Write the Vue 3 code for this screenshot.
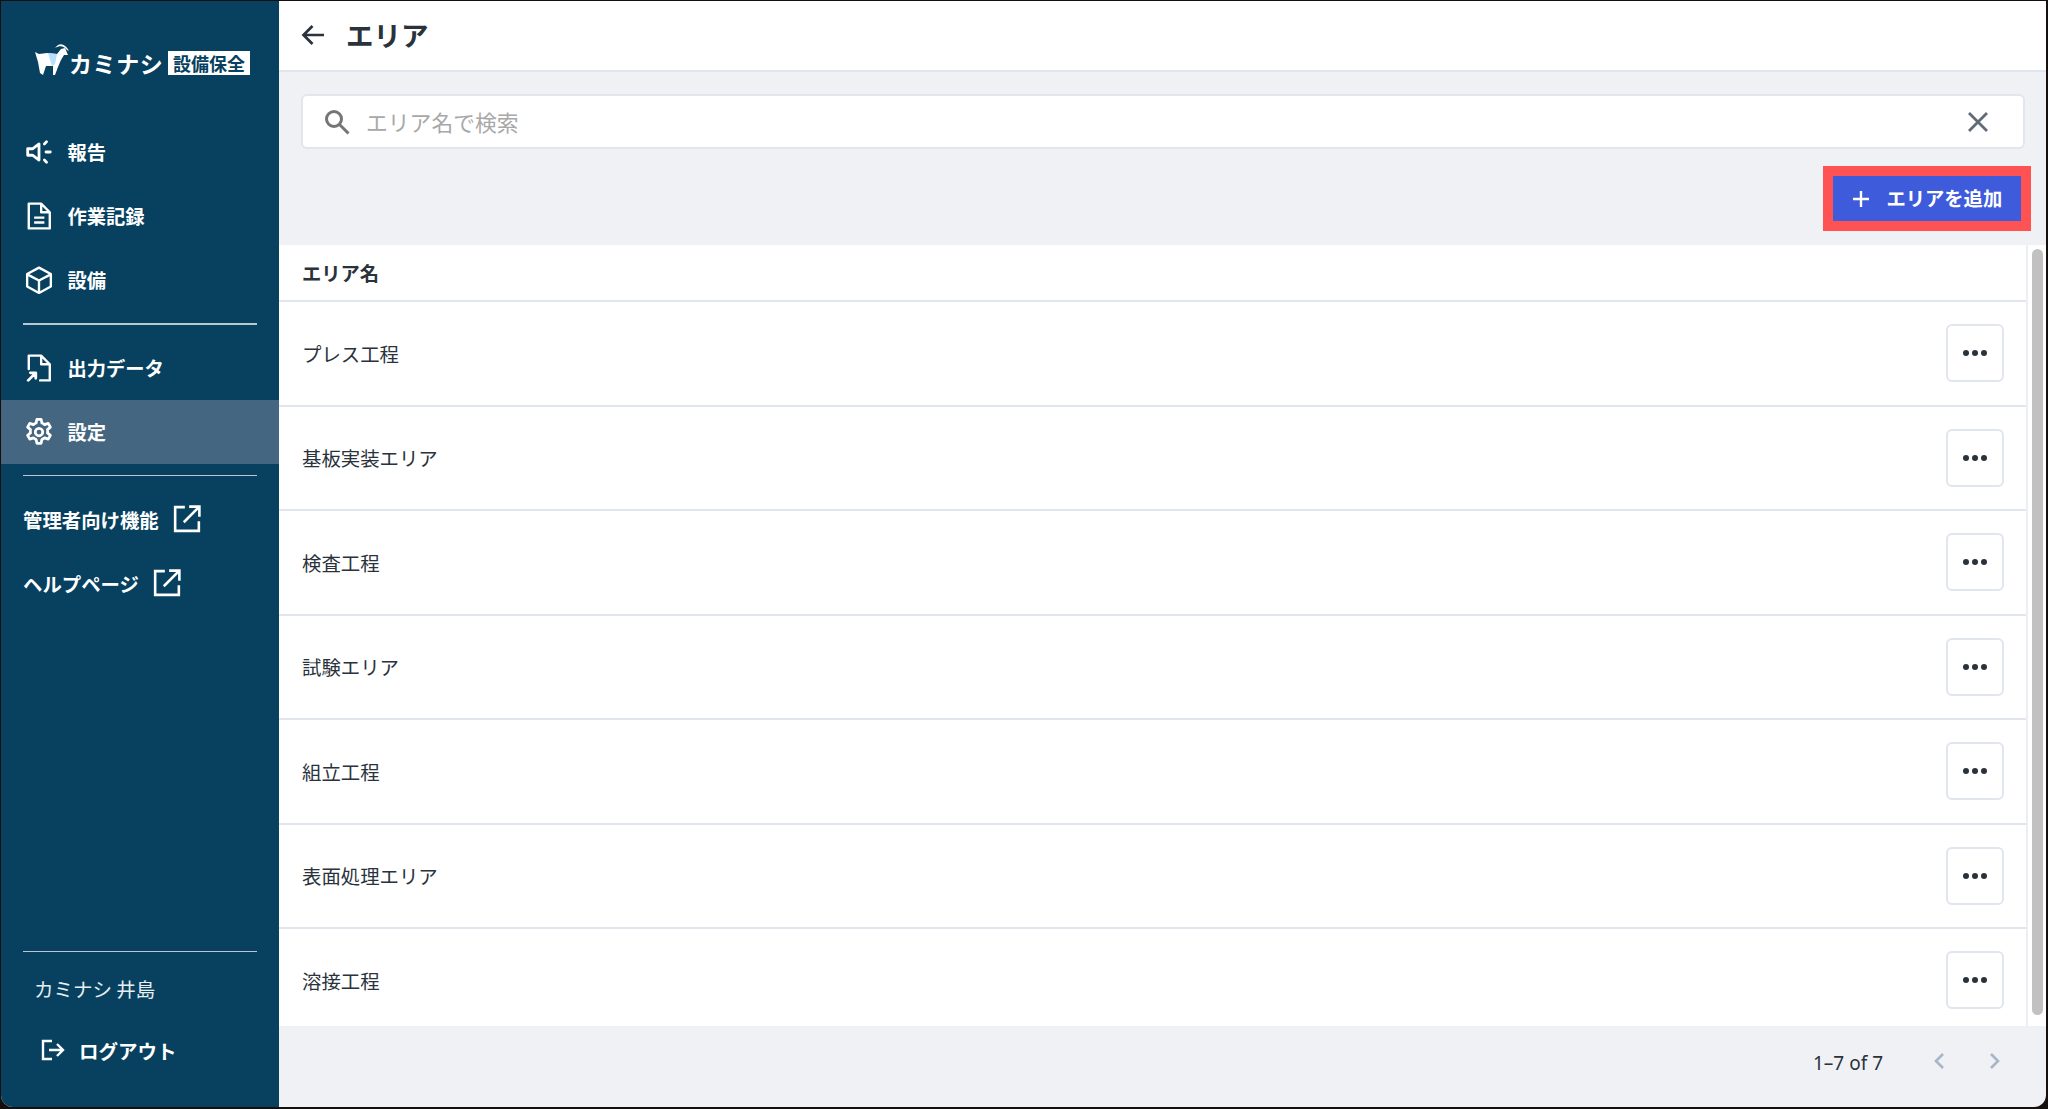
<script setup>
const areas = ['プレス工程', '基板実装エリア', '検査工程', '試験エリア', '組立工程', '表面処理エリア', '溶接工程']
</script>

<template>
  <div class="frame">
    <div class="window">
      <aside class="sidebar">
        <div class="logo">
          <svg class="goat" viewBox="0 0 34 34" width="34" height="34">
            <path d="M0 10 L4 12 L12 11 L22 12 L26 7 L30 6 L33 13 L29 13 L26 18 L23 25 L20 33 L18 33 L18 24 L11 24 L8 33 L5 31 L3 20 Z" fill="#fff"/>
            <path d="M13 11 L22 12 L20 22 L17 24 Z" fill="#b6e0fb"/>
            <path d="M20 6 C24 0 30 1 34 9 L32 8 C29 4 25 3 20 6 Z" fill="#fff"/>
          </svg>
          <span class="logo-text">カミナシ</span>
          <span class="logo-badge">設備保全</span>
        </div>

        <a class="nav-item">
          <svg class="nav-icon" viewBox="0 0 26 26" fill="none" stroke="#fff" stroke-width="2.6" stroke-linejoin="round" stroke-linecap="round">
            <path d="M2.5 10 H7 L13 5.5 V20.5 L7 16 H2.5 Z"/>
            <path d="M18 5.5 L20 3.5 M19.5 13 H23.5 M18 20.5 L20 22.5"/>
          </svg>
          <span>報告</span>
        </a>
        <a class="nav-item">
          <svg class="nav-icon" viewBox="0 0 26 26" fill="none" stroke="#fff" stroke-width="2.2" stroke-linejoin="round">
            <path d="M3.5 1.5 H15 L23 9.5 V24.5 H3.5 Z M15 1.5 V9.5 H23"/>
            <path d="M8.5 14.5 H18 M8.5 19 H18"/>
          </svg>
          <span>作業記録</span>
        </a>
        <a class="nav-item">
          <svg class="nav-icon" viewBox="0 0 26 26" fill="none" stroke="#fff" stroke-width="2.2" stroke-linejoin="round">
            <path d="M13 1.5 L24 7.5 V19 L13 25 L2 19 V7.5 Z"/>
            <path d="M2.5 8 L13 13.5 L23.5 8 M13 13.5 V24.5"/>
          </svg>
          <span>設備</span>
        </a>

        <hr class="rule rule-mid" />

        <a class="nav-item">
          <svg class="nav-icon" viewBox="0 0 26 26" fill="none" stroke="#fff" stroke-width="2.2" stroke-linejoin="round" stroke-linecap="round">
            <path d="M3.5 14 V1.5 H15 L23 9.5 V24.5 H14 M15 1.5 V9.5 H23"/>
            <path d="M3 24.5 L9.5 18 M5 17.5 H10 V22.5" stroke-width="2.6"/>
          </svg>
          <span>出力データ</span>
        </a>
        <a class="nav-item active">
          <svg class="nav-icon gear" viewBox="0 0 24 24" fill="none" stroke="#fff" stroke-width="2.2" stroke-linejoin="round" stroke-linecap="round">
            <path d="M10.3 1.8 h3.4 l.6 3 a7.5 7.5 0 0 1 2.2 1.3 l2.9-1 1.7 3-2.3 2 a7.5 7.5 0 0 1 0 2.6 l2.3 2-1.7 3-2.9-1 a7.5 7.5 0 0 1-2.2 1.3 l-.6 3 h-3.4 l-.6-3 a7.5 7.5 0 0 1-2.2-1.3 l-2.9 1-1.7-3 2.3-2 a7.5 7.5 0 0 1 0-2.6 l-2.3-2 1.7-3 2.9 1 a7.5 7.5 0 0 1 2.2-1.3 Z"/>
            <circle cx="12" cy="12" r="3"/>
          </svg>
          <span>設定</span>
        </a>

        <hr class="rule rule-mid" />

        <a class="ext-item">
          <span>管理者向け機能</span>
          <svg class="ext-icon" viewBox="0 0 26 26" fill="none" stroke="#fff" stroke-width="2.4">
            <path d="M11 2 H2 V24 H24 V15"/>
            <path d="M10 16 L24 2 M15 1.5 H24.5 V11"/>
          </svg>
        </a>
        <a class="ext-item">
          <span>ヘルプページ</span>
          <svg class="ext-icon" viewBox="0 0 26 26" fill="none" stroke="#fff" stroke-width="2.4">
            <path d="M11 2 H2 V24 H24 V15"/>
            <path d="M10 16 L24 2 M15 1.5 H24.5 V11"/>
          </svg>
        </a>

        <div class="side-bottom">
          <hr class="rule" />
          <div class="user">カミナシ 井島</div>
          <a class="logout">
            <svg class="logout-icon" viewBox="0 0 24 22" fill="none" stroke="#fff" stroke-width="2.4">
              <path d="M11 2 H2 V20 H11"/>
              <path d="M8 11 H22 M16 5 L22 11 L16 17"/>
            </svg>
            <span>ログアウト</span>
          </a>
        </div>
      </aside>

      <main class="main">
        <header class="topbar">
          <svg class="back" viewBox="0 0 24 24" fill="none" stroke="#2a323c" stroke-width="2.7">
            <path d="M23 12 H3 M11.5 3 L2.5 12 L11.5 21"/>
          </svg>
          <h1>エリア</h1>
        </header>

        <div class="search-wrap">
          <div class="search">
            <svg class="search-icon" viewBox="0 0 26 26" fill="none" stroke="#757575" stroke-width="3">
              <circle cx="10" cy="10" r="7.5"/>
              <path d="M15.5 15.5 L24.5 24.5"/>
            </svg>
            <span class="placeholder">エリア名で検索</span>
            <svg class="clear" viewBox="0 0 20 20" fill="none" stroke="#5f6b77" stroke-width="2.8">
              <path d="M1 1 L19 19 M19 1 L1 19"/>
            </svg>
          </div>
        </div>

        <div class="actions">
          <button class="add">
            <svg class="plus" viewBox="0 0 16 16" fill="none" stroke="#fff" stroke-width="2.4"><path d="M8 0 V16 M0 8 H16"/></svg>
            <span class="add-label">エリアを追加</span>
          </button>
        </div>

        <section class="table">
          <div class="rows">
            <div class="thead">エリア名</div>
            <div v-for="a in areas" :key="a" class="row">
              <span class="row-name">{{ a }}</span>
              <button class="more" aria-label="more"><i></i><i></i><i></i></button>
            </div>
          </div>
          <div class="track"><div class="thumb"></div></div>
        </section>

        <footer class="pager">
          <span class="count">1–7 of 7</span>
          <svg class="chev" viewBox="0 0 12 18" fill="none" stroke="#a9b6c8" stroke-width="2.6"><path d="M10 2 L3 9 L10 16"/></svg>
          <svg class="chev" viewBox="0 0 12 18" fill="none" stroke="#a9b6c8" stroke-width="2.6"><path d="M2 2 L9 9 L2 16"/></svg>
        </footer>
      </main>
    </div>
  </div>
</template>

<style>
html, body { margin: 0; background: #15100e; }
</style>

<style scoped>
* { box-sizing: border-box; }
.frame {
  width: 2048px;
  height: 1109px;
  padding: 1px 2px 2px 1px;
  background: #15100e;
  font-family: "Noto Sans CJK JP", "Noto Sans", sans-serif;
  color: #2a323c;
  overflow: hidden;
}
.window {
  display: flex;
  height: 100%;
  border-radius: 0 0 12px 12px;
  overflow: hidden;
  background: #eff1f5;
}
.sidebar {
  width: 278px;
  flex: none;
  display: flex;
  flex-direction: column;
  background: #07415f;
  color: #fff;
}
.logo {
  height: 119px;
  padding: 41px 0 0 34px;
  display: flex;
  align-items: flex-start;
}
.goat { margin-right: 0; flex: none; }
.logo-text {
  font-size: 23px;
  font-weight: 700;
  line-height: 30px;
  letter-spacing: 0.6px;
  margin-top: 6px;
  white-space: nowrap;
  width: 99px;
}
.logo-badge {
  margin-top: 9px;
  background: #fff;
  color: #07415f;
  font-size: 18px;
  font-weight: 700;
  line-height: 24px;
  width: 82px;
  text-align: center;
  white-space: nowrap;
}
.nav-item {
  height: 64px;
  padding-left: 24px;
  display: flex;
  align-items: center;
  gap: 14.5px;
  font-size: 19.3px;
  font-weight: 700;
}
.nav-item.active { background: #446680; }
.nav-icon { width: 28px; height: 28px; flex: none; }
.gear { width: 30px; height: 30px; margin: 0 -1px; }
.rule {
  margin: 0 22px;
  height: 1.5px;
  border: 0;
  background: #b8c7d0;
  flex: none;
}
.rule-mid { margin-top: 11px; margin-bottom: 11px; }
.ext-item {
  height: 64px;
  padding-left: 22px;
  display: flex;
  align-items: center;
  gap: 14px;
  font-size: 19.4px;
  font-weight: 700;
}
.ext-icon { width: 28px; height: 28px; flex: none; }
.side-bottom {
  margin-top: auto;
  display: flex;
  flex-direction: column;
  padding-bottom: 39px;
}
.user {
  margin: 19px 0 0 33px;
  height: 36px;
  line-height: 36px;
  font-size: 19.5px;
  font-weight: 400;
  color: #e8eef2;
}
.logout {
  margin: 25px 0 0 40px;
  height: 36px;
  display: flex;
  align-items: center;
  gap: 14px;
  font-size: 19.5px;
  font-weight: 700;
}
.logout-icon { width: 24px; height: 22px; flex: none; }
.main {
  flex: 1;
  min-width: 0;
  display: flex;
  flex-direction: column;
}
.topbar {
  height: 71px;
  flex: none;
  background: #fff;
  border-bottom: 2px solid #e1e5ee;
  padding-left: 22px;
  display: flex;
  align-items: center;
}
.back { width: 24px; height: 24px; flex: none; margin-right: 21px; margin-top: -2px; }
h1 {
  margin: 0;
  font-size: 27.5px;
  font-weight: 700;
  line-height: 36px;
  margin-top: -3px;
}
.search-wrap { padding: 22px 21px 0 22px; }
.search {
  height: 55px;
  background: #fff;
  border: 2px solid #e1e5ee;
  border-radius: 6px;
  padding: 0 35px 0 21px;
  display: flex;
  align-items: center;
}
.search-icon { width: 26px; height: 26px; flex: none; margin-right: 16px; }
.placeholder { flex: 1; font-size: 21.8px; color: #a8a8a8; }
.clear { width: 20px; height: 20px; flex: none; }
.actions {
  display: flex;
  justify-content: flex-end;
  padding: 27px 25px 24px 0;
}
.add {
  width: 188px;
  height: 45px;
  border: 0;
  outline: 10px solid #ff5252;
  background: #3d5bdb;
  color: #fff;
  font-family: inherit;
  font-size: 19.3px;
  font-weight: 700;
  display: flex;
  align-items: center;
  padding: 0 0 0 20px;
  gap: 17.5px;
}
.add-label { margin-top: -2px; }
.plus { width: 16px; height: 16px; flex: none; }
.table {
  flex: 1;
  min-height: 0;
  display: flex;
  background: #fff;
  overflow: hidden;
}
.rows { flex: 1; min-width: 0; border-right: 2px solid #eceef3; }
.thead {
  height: 57px;
  border-bottom: 2px solid #e1e5ee;
  padding-left: 23px;
  display: flex;
  align-items: center;
  font-size: 19.3px;
  font-weight: 700;
}
.row {
  height: 104.5px;
  border-bottom: 2px solid #e1e5ee;
  padding: 0 22px 0 23px;
  display: flex;
  align-items: center;
  justify-content: space-between;
  font-size: 19.4px;
}
.more {
  width: 58px;
  height: 58px;
  padding: 0;
  background: #fff;
  border: 2px solid #e1e5ee;
  border-radius: 6px;
  display: flex;
  align-items: center;
  justify-content: center;
  gap: 3px;
}
.more i { width: 6px; height: 6px; border-radius: 50%; background: #2a323c; }
.track { width: 18px; flex: none; padding: 4px 3px 11px 4px; }
.thumb { height: 100%; background: #c1c1c1; border-radius: 6px; }
.pager {
  height: 81px;
  flex: none;
  display: flex;
  align-items: center;
  padding: 0 45px 10px 0;
  justify-content: flex-end;
}
.count {
  font-family: "Noto Sans", sans-serif;
  font-size: 19px;
  margin-right: 50px;
  margin-top: 2px;
}
.chev { width: 12px; height: 18px; flex: none; margin-left: 44px; margin-top: -2px; }
.count + .chev { margin-left: 0; }
</style>
